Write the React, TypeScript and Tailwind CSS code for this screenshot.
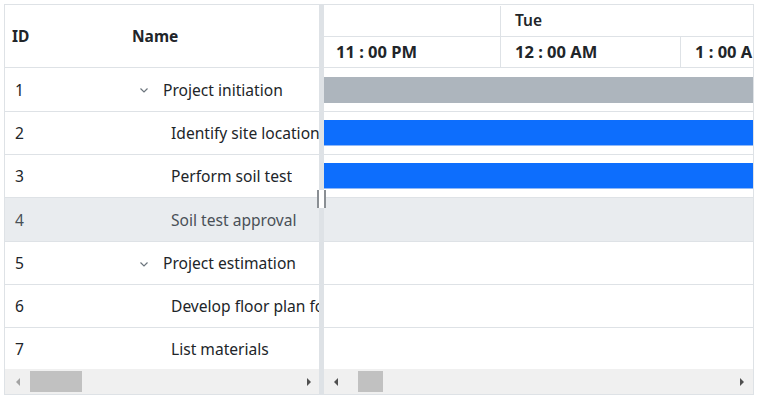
import React from 'react';

type Row = { id: number; name: string; parent?: boolean; h: string; bar?: 'gray' | 'blue'; selected?: boolean };

const rows: Row[] = [
  { id: 1, name: 'Project initiation', parent: true, h: 'h-[44px]', bar: 'gray' },
  { id: 2, name: 'Identify site location', h: 'h-[43px]', bar: 'blue' },
  { id: 3, name: 'Perform soil test', h: 'h-[43px]', bar: 'blue' },
  { id: 4, name: 'Soil test approval', h: 'h-[44px]', selected: true },
  { id: 5, name: 'Project estimation', parent: true, h: 'h-[43px]' },
  { id: 6, name: 'Develop floor plan for estimation', h: 'h-[43px]' },
  { id: 7, name: 'List materials', h: 'h-[41px]' },
];

function Chevron() {
  return (
    <svg width="10" height="10" viewBox="0 0 10 10" className="shrink-0">
      <path d="M1.5 3.5 L5 7 L8.5 3.5" fill="none" stroke="#6c757d" strokeWidth="1.2" />
    </svg>
  );
}

function Arrow({ dir, color }: { dir: 'left' | 'right'; color: string }) {
  return (
    <svg width="6" height="10" viewBox="0 0 6 10">
      {dir === 'left' ? <path d="M5 1 L1 5 L5 9 Z" fill={color} /> : <path d="M1 1 L5 5 L1 9 Z" fill={color} />}
    </svg>
  );
}

export default function App() {
  return (
    <div className="w-[757px] h-[397px] bg-white p-[4px]" style={{ fontFamily: '"Noto Sans", "Open Sans", sans-serif' }}>
      <div className="relative w-[750px] h-[391px] border border-[#dee2e6] flex text-[#212529]">
        {/* tree grid */}
        <div className="w-[314px] flex flex-col overflow-hidden">
          <div className="h-[63px] shrink-0 border-b border-[#dee2e6] flex items-center pt-[2px] text-[15.5px] font-bold">
            <div className="w-[115px] pl-[7px]">ID</div>
            <div className="pl-[12px]">Name</div>
          </div>
          {rows.map((r) => (
            <div
              key={r.id}
              className={`${r.h} shrink-0 flex items-center pt-[2px] text-[15.6px] ${r.id < 7 ? 'border-b border-[#dee2e6]' : ''} ${r.selected ? 'bg-[#e9ecef] text-[#495057]' : ''}`}
            >
              <div className="w-[115px] pl-[10px] shrink-0">{r.id}</div>
              <div className="flex items-center whitespace-nowrap overflow-hidden">
                {r.parent ? (
                  <div className="flex items-center gap-[14px] pl-[19px]">
                    <Chevron />
                    <span>{r.name}</span>
                  </div>
                ) : (
                  <span className="pl-[51px]">{r.name}</span>
                )}
              </div>
            </div>
          ))}
          <div className="h-[25px] shrink-0 bg-[#f0f0f0] flex items-center">
            <div className="w-[25px] flex justify-center"><Arrow dir="left" color="#a3a3a3" /></div>
            <div className="w-[52px] h-[21px] bg-[#c1c1c1]" />
            <div className="flex-1" />
            <div className="w-[20px] flex justify-center"><Arrow dir="right" color="#505050" /></div>
          </div>
        </div>

        {/* splitter */}
        <div className="w-[5px] bg-[#dee2e6] shrink-0" />
        <div className="absolute left-[312px] top-[185px] w-[9px] h-[18px] bg-white border-x-2 border-[#8a8f94]" />

        {/* chart */}
        <div className="flex-1 flex flex-col overflow-hidden">
          <div className="h-[32px] shrink-0 border-b border-[#dee2e6] flex pt-[1px] text-[15.5px] font-semibold">
            <div className="w-[177px] shrink-0 border-r border-[#dee2e6]" />
            <div className="flex items-center pl-[14px]">Tue</div>
          </div>
          <div className="h-[31px] shrink-0 border-b border-[#dee2e6] flex text-[16.5px] font-bold whitespace-nowrap">
            <div className="w-[177px] shrink-0 border-r border-[#dee2e6] flex items-center pt-[1px] pl-[12px]">11 : 00 PM</div>
            <div className="w-[180px] shrink-0 border-r border-[#dee2e6] flex items-center pt-[1px] pl-[14px]">12 : 00 AM</div>
            <div className="w-[180px] shrink-0 flex items-center pt-[1px] pl-[14px]">1 : 00 AM</div>
          </div>
          {rows.map((r) => (
            <div
              key={r.id}
              className={`${r.h} shrink-0 flex items-center ${r.id < 7 ? 'border-b border-[#dee2e6]' : ''} ${r.selected ? 'bg-[#e9ecef]' : ''}`}
            >
              {r.bar === 'gray' && <div className="w-full h-[26px] bg-[#adb5bd]" />}
              {r.bar === 'blue' && <div className="w-full h-[26px] bg-[#0d6efd] border-b border-[#8fb8f7]" />}
            </div>
          ))}
          <div className="h-[25px] shrink-0 bg-[#f0f0f0] flex items-center">
            <div className="w-[24px] flex justify-center"><Arrow dir="left" color="#505050" /></div>
            <div className="w-[10px]" />
            <div className="w-[25px] h-[21px] bg-[#c1c1c1]" />
            <div className="flex-1" />
            <div className="w-[22px] flex justify-center"><Arrow dir="right" color="#505050" /></div>
          </div>
        </div>
      </div>
    </div>
  );
}
